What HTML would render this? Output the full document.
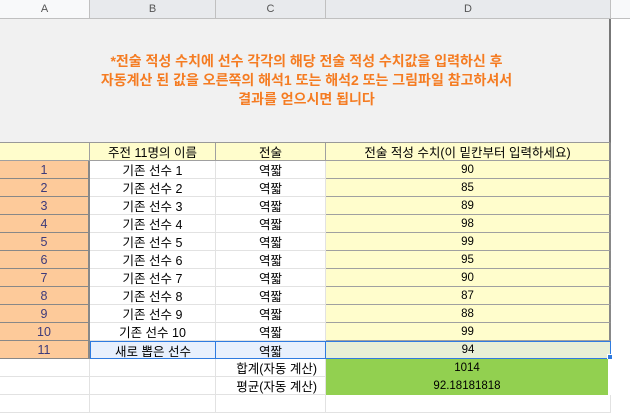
<!DOCTYPE html><html><head><meta charset="utf-8"><style>
body{margin:0;width:630px;height:418px;overflow:hidden;background:#fff;font-family:"Liberation Sans","Noto Sans CJK KR",sans-serif;position:relative}
div{position:absolute;box-sizing:border-box}
.c{display:flex;align-items:center;justify-content:center;font-size:12.5px;color:#000;white-space:nowrap}
.h{background:#e8eaed;color:#555;font-size:11px;border-right:1px solid #c0c0c0;border-bottom:1px solid #c0c0c0}
.g{border-right:1px solid #e2e2e2;border-bottom:1px solid #e2e2e2}
.b{border-right:1px solid #a0a0a0;border-bottom:1px solid #a0a0a0}
</style></head><body>
<div class="c h" style="left:0;top:0;width:90px;height:19px;background:#f8f9fa">A</div>
<div class="c h" style="left:90px;top:0;width:126px;height:19px">B</div>
<div class="c h" style="left:216px;top:0;width:110px;height:19px">C</div>
<div class="c h" style="left:326px;top:0;width:285px;height:19px">D</div>
<div class="h" style="left:611px;top:0;width:19px;height:19px;background:#f8f9fa;border-right:none"></div>
<div class="c" style="left:0;top:19px;width:611px;height:124px;background:#f1f1f1;border-right:2px solid #777;border-bottom:1px solid #999;color:#f57c22;font-weight:bold;font-size:14px;line-height:19px;text-align:center;flex-direction:column;padding-left:4px">
<span>*전술 적성 수치에 선수 각각의 해당 전술 적성 수치값을 입력하신 후</span>
<span>자동계산 된 값을 오른쪽의 해석1 또는 해석2 또는 그림파일 참고하셔서</span>
<span>결과를 얻으시면 됩니다</span></div>
<div id="rows"></div>
<script>
var h='';var T=143;
function cell(l,w,t,bg,txt,cls,extra){return '<div class="c '+cls+'" style="left:'+l+'px;top:'+t+'px;width:'+w+'px;height:18px;background:'+bg+';'+(extra||'')+'">'+txt+'</div>';}
h+=cell(0,90,T,'#fffdcc','','b');
h+=cell(90,126,T,'#fffdcc','주전 11명의 이름','b');
h+=cell(216,110,T,'#fffdcc','전술','b');
h+=cell(326,285,T,'#fffdcc','전술 적성 수치(이 밑칸부터 입력하세요)','b','border-right:2px solid #888');
var v=[90,85,89,98,99,95,90,87,88,99,94];
for(var i=0;i<11;i++){var t=161+i*18;var last=i==10;
h+=cell(0,90,t,'#fdca9a','<span style="color:#3d3a7a">'+(i+1)+'</span>','b','border-right:2px solid #888;border-bottom:1px solid #888');
h+=cell(90,126,t,last?'#e8f0fd':'#fff',last?'새로 뽑은 선수':'기존 선수 '+(i+1),'g',last?'border:1px solid #2f7be0':'');
h+=cell(216,110,t,last?'#e8f0fd':'#fff','역짧','g',last?'border:1px solid #2f7be0;border-left:none':'');
h+=cell(326,285,t,last?'#e8efd6':'#fffdcc',v[i],'b',(last?'border:1px solid #2f7be0;border-left:none;':'border-right:2px solid #888;')+'font-size:11.5px');}
h+='<div style="left:607px;top:354px;width:6px;height:6px;background:#2f7be0;border:1px solid #fff"></div>';
var s=[['합계(자동 계산)','1014'],['평균(자동 계산)','92.18181818']];
for(var j=0;j<2;j++){var t=359+j*18;
h+=cell(0,90,t,'#fff','','g');h+=cell(90,126,t,'#fff','','g');
h+=cell(216,110,t,'#fff',s[j][0],'g','justify-content:flex-end;padding-right:8px');
h+=cell(326,282,t,'#92d050',s[j][1],'','font-size:11.5px');}
h+=cell(0,90,395,'#fff','','g');h+=cell(90,126,395,'#fff','','g');h+=cell(216,110,395,'#fff','','g');h+=cell(326,285,395,'#fff','','g');
document.getElementById('rows').outerHTML=h;
</script>
</body></html>
